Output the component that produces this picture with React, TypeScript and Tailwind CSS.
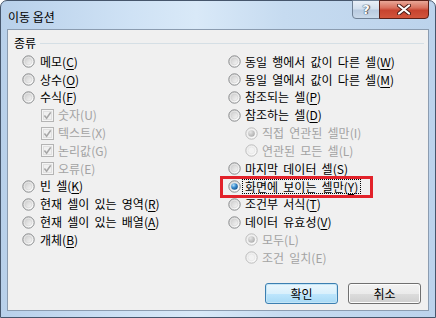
import React from "react";

type Row = {
  kind: "radio" | "check";
  label: string;
  key: string;
  disabled?: boolean;
  checked?: boolean;
  indent?: boolean;
  focus?: boolean;
};

const leftRows: Row[] = [
  { kind: "radio", label: "메모", key: "C" },
  { kind: "radio", label: "상수", key: "O" },
  { kind: "radio", label: "수식", key: "F" },
  { kind: "check", label: "숫자", key: "U", disabled: true, checked: true, indent: true },
  { kind: "check", label: "텍스트", key: "X", disabled: true, checked: true, indent: true },
  { kind: "check", label: "논리값", key: "G", disabled: true, checked: true, indent: true },
  { kind: "check", label: "오류", key: "E", disabled: true, checked: true, indent: true },
  { kind: "radio", label: "빈 셀", key: "K" },
  { kind: "radio", label: "현재 셀이 있는 영역", key: "R" },
  { kind: "radio", label: "현재 셀이 있는 배열", key: "A" },
  { kind: "radio", label: "개체", key: "B" },
];

const rightRows: Row[] = [
  { kind: "radio", label: "동일 행에서 값이 다른 셀", key: "W" },
  { kind: "radio", label: "동일 열에서 값이 다른 셀", key: "M" },
  { kind: "radio", label: "참조되는 셀", key: "P" },
  { kind: "radio", label: "참조하는 셀", key: "D" },
  { kind: "radio", label: "직접 연관된 셀만", key: "I", disabled: true, checked: true, indent: true },
  { kind: "radio", label: "연관된 모든 셀", key: "L", disabled: true, indent: true },
  { kind: "radio", label: "마지막 데이터 셀", key: "S" },
  { kind: "radio", label: "화면에 보이는 셀만", key: "Y", checked: true, focus: true },
  { kind: "radio", label: "조건부 서식", key: "T" },
  { kind: "radio", label: "데이터 유효성", key: "V" },
  { kind: "radio", label: "모두", key: "L", disabled: true, checked: true, indent: true },
  { kind: "radio", label: "조건 일치", key: "E", disabled: true, indent: true },
];

function Radio({ checked, disabled }: { checked?: boolean; disabled?: boolean }) {
  return (
    <svg width="13" height="13" viewBox="0 0 13 13" className="shrink-0">
      <circle
        cx="6.5"
        cy="6.5"
        r="5.7"
        fill={disabled ? "url(#rgOuterDis)" : "url(#rgOuter)"}
        stroke={disabled ? "#bdbdbd" : "#8a8c8e"}
        strokeWidth="1"
      />
      {checked ? (
        <circle cx="6.5" cy="6.5" r="3.3" fill={disabled ? "url(#rgDotDis)" : "url(#rgDot)"} />
      ) : (
        <circle
          cx="6.5"
          cy="6.5"
          r="3.4"
          fill={disabled ? "#f2f2f2" : "url(#rgInner)"}
          stroke={disabled ? "#e2e2e2" : "#d0d0d0"}
          strokeWidth="0.6"
        />
      )}
    </svg>
  );
}

function Check() {
  return (
    <svg width="13" height="13" viewBox="0 0 13 13" className="shrink-0">
      <rect x="0.5" y="0.5" width="12" height="12" fill="#f4f4f4" stroke="#b4b4b4" />
      <rect x="2.5" y="2.5" width="8" height="8" fill="#f0f0f0" stroke="#e0e0e0" />
      <path d="M3.4 6.6 L5.6 9.2 L9.7 3.4" fill="none" stroke="#a6a6a6" strokeWidth="1.6" />
    </svg>
  );
}

function Label({ row }: { row: Row }) {
  const color = row.disabled ? "text-[#a3a3a3]" : "text-black";
  return (
    <span className={`${color} whitespace-nowrap [word-spacing:2.5px]`}>
      {row.label}(
      {row.disabled ? row.key : <span className="underline underline-offset-[2px]">{row.key}</span>})
    </span>
  );
}

function OptionRow({ row, side }: { row: Row; side: "left" | "right" }) {
  const indent =
    row.kind === "check" ? "pl-[19px]" : row.indent ? "pl-[17px]" : "pl-0";
  const gap = side === "left" && !row.indent ? "gap-[5px]" : "gap-[4px]";
  return (
    <div className={`relative flex h-[17.8px] items-center ${indent} ${gap}`}>
      {row.kind === "radio" ? (
        <Radio checked={row.checked} disabled={row.disabled} />
      ) : (
        <Check />
      )}
      {row.focus ? (
        <span className="-ml-[3px] border border-dotted border-black px-[2px] leading-[13px]">
          <Label row={row} />
        </span>
      ) : (
        <Label row={row} />
      )}
      {row.focus && (
        <div className="pointer-events-none absolute left-[-8px] top-[-2px] h-[22px] w-[153px] border-[3px] border-[#e2222a]" />
      )}
    </div>
  );
}

export default function App() {
  return (
    <div className="h-[318px] w-[436px] bg-white font-['Noto_Sans_CJK_KR','Noto_Sans',sans-serif] text-[12px] leading-[14px]">
      <svg width="0" height="0" className="absolute">
        <defs>
          <radialGradient id="rgOuter" cx="0.7" cy="0.75" r="0.8">
            <stop offset="0" stopColor="#ffffff" />
            <stop offset="1" stopColor="#dcdcdc" />
          </radialGradient>
          <radialGradient id="rgOuterDis" cx="0.7" cy="0.75" r="0.8">
            <stop offset="0" stopColor="#fbfbfb" />
            <stop offset="1" stopColor="#ececec" />
          </radialGradient>
          <linearGradient id="rgInner" x1="0" y1="0" x2="1" y2="1">
            <stop offset="0" stopColor="#cfcfcf" />
            <stop offset="1" stopColor="#f7f7f7" />
          </linearGradient>
          <radialGradient id="rgDot" cx="0.35" cy="0.3" r="0.8">
            <stop offset="0" stopColor="#b9e3fb" />
            <stop offset="0.45" stopColor="#3c8ed0" />
            <stop offset="1" stopColor="#0d4a86" />
          </radialGradient>
          <radialGradient id="rgDotDis" cx="0.35" cy="0.3" r="0.8">
            <stop offset="0" stopColor="#e6e6e6" />
            <stop offset="1" stopColor="#a8a8a8" />
          </radialGradient>
        </defs>
      </svg>
      <div className="flex h-[318px] w-[436px] flex-col rounded-t-[7px] border border-[#46566c] bg-[linear-gradient(90deg,#b8d0ea_0%,#cfe2f5_30%,#d9e9f8_45%,#c6dbf0_65%,#bcd3ec_100%)]">
        {/* title bar */}
        <div className="flex h-[28px] shrink-0 items-start">
          <span className="ml-[7px] mt-[8px] text-[12px] leading-[16px] text-black">이동 옵션</span>
          <div className="-mt-px ml-auto mr-[6px] flex h-[19px]">
            <div className="flex w-[28px] items-center justify-center rounded-bl-[4px] border border-[#6f8196] bg-[linear-gradient(180deg,#e9f0f8_0%,#d3e0ee_45%,#b9cbe0_55%,#c9d9ea_100%)]">
              <span className="font-['DejaVu_Sans',sans-serif] text-[13px] font-bold leading-[13px] text-white [text-shadow:0_0_1px_#3d4a5a,0_0_1px_#3d4a5a,1px_0_1px_#3d4a5a]">
                ?
              </span>
            </div>
            <div className="-ml-px flex w-[50px] items-center justify-center rounded-br-[4px] border border-[#5b2018] bg-[linear-gradient(180deg,#e9a797_0%,#d9715e_40%,#c7432f_55%,#d2553c_100%)]">
              <svg width="14" height="11" viewBox="0 0 14 11">
                <path d="M2 1.5 L12 9.5 M12 1.5 L2 9.5" stroke="#4a1a14" strokeWidth="4" strokeLinecap="round" />
                <path d="M2 1.5 L12 9.5 M12 1.5 L2 9.5" stroke="#ffffff" strokeWidth="2.2" strokeLinecap="round" />
              </svg>
            </div>
          </div>
        </div>
        {/* client area */}
        <div className="mx-[6px] mb-[6px] flex flex-1 flex-col border border-[#8b9cb0] bg-[#f0f0f0]">
          <div className="mt-[6px] flex h-[14px] items-center pl-[6px]">
            <span className="text-black">종류</span>
            <div className="ml-[4px] mr-[4px] h-px flex-1 bg-[#d5dfe5]" />
          </div>
          <div className="mt-[3px] flex pl-[14px]">
            <div className="flex w-[206px] flex-col">
              {leftRows.map((r, i) => (
                <OptionRow key={i} row={r} side="left" />
              ))}
            </div>
            <div className="flex flex-col">
              {rightRows.map((r, i) => (
                <OptionRow key={i} row={r} side="right" />
              ))}
            </div>
          </div>
          <div className="mb-[6px] mt-auto flex justify-end gap-[10px] pr-[7px]">
            <button className="flex h-[21px] w-[73px] items-center justify-center rounded-[3px] border border-[#3c7fb1] bg-[linear-gradient(180deg,#eaf6fd_0%,#d9f0fc_50%,#bee6fd_51%,#a7d9f5_100%)] text-black shadow-[inset_0_0_0_1px_#c4e5f6]">
              확인
            </button>
            <button className="flex h-[21px] w-[73px] items-center justify-center rounded-[3px] border border-[#707070] bg-[linear-gradient(180deg,#f2f2f2_0%,#ebebeb_50%,#dddddd_51%,#cfcfcf_100%)] text-black shadow-[inset_0_0_0_1px_#fcfcfc]">
              취소
            </button>
          </div>
        </div>
      </div>
    </div>
  );
}
